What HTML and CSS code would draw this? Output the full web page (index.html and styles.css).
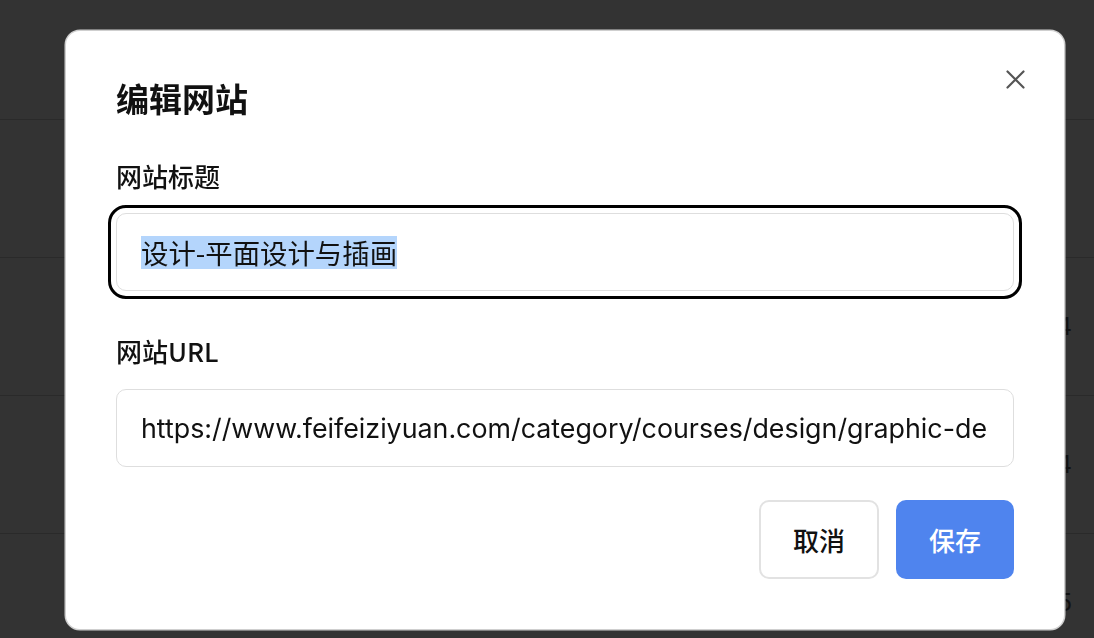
FILE: index.html
```html
<!DOCTYPE html>
<html lang="zh-CN">
<head>
<meta charset="utf-8">
<title>编辑网站</title>
<link rel="stylesheet" href="styles.css">
</head>
<body>
<div class="page">
  <div class="page-head"></div>
  <div class="row"><span class="num"></span></div>
  <div class="row"><span class="num">4</span></div>
  <div class="row"><span class="num">4</span></div>
  <div class="row row-last"><span class="num">5</span></div>
</div>

<div class="overlay">
  <div class="modal" role="dialog" aria-labelledby="dlg-title">
    <button class="close" aria-label="关闭">
      <svg width="19" height="19" viewBox="0 0 19 19"><path d="M1.5 1.5 L17.5 17.5 M17.5 1.5 L1.5 17.5" stroke="#555" stroke-width="2.2" stroke-linecap="round" fill="none"/></svg>
    </button>
    <h2 class="title" id="dlg-title">编辑网站</h2>
    <label class="label">网站标题</label>
    <div class="field focused" role="textbox"><span class="sel">设计-平面设计与插画</span></div>
    <label class="label label-url">网站URL</label>
    <div class="field" role="textbox"><span class="url">https://www.feifeiziyuan.com/category/courses/design/graphic-de</span></div>
    <div class="actions">
      <button class="btn btn-cancel">取消</button>
      <button class="btn btn-save">保存</button>
    </div>
  </div>
</div>
</body>
</html>
```

FILE: styles.css
```css
html, body {
  margin: 0;
  padding: 0;
  height: 100%;
  overflow: hidden;
}
body {
  background: #333333;
  font-family: "Noto Sans CJK SC", "Inter", sans-serif;
  color: #111;
}
.page {
  display: flex;
  flex-direction: column;
}
.page-head {
  height: 119px;
  border-bottom: 1px solid #2a2a2a;
}
.row {
  height: 137px;
  border-bottom: 1px solid #2a2a2a;
  display: flex;
  align-items: center;
  justify-content: flex-end;
  padding-right: 22px;
}
.row-last {
  height: 104px;
  border-bottom: 0;
  align-items: flex-start;
  box-sizing: border-box;
  padding-top: 54px;
}
.num {
  font-family: "Inter", sans-serif;
  font-size: 24px;
  line-height: 29px;
  color: #111;
}
.overlay {
  position: fixed;
  inset: 0;
  padding: 31px 30px 0 66px;
}
.modal {
  position: relative;
  box-sizing: border-box;
  height: 598px;
  background: #fff;
  border-radius: 14px;
  box-shadow: 0 0 0 1.5px #cfcfcf;
  padding: 46px 50px 48px 50px;
  display: flex;
  flex-direction: column;
}
.close {
  position: absolute;
  top: 39px;
  right: 39px;
  width: 19px;
  height: 19px;
  padding: 0;
  border: 0;
  background: none;
  display: flex;
}
.title {
  margin: 0;
  font-size: 33px;
  line-height: 42px;
  font-weight: 700;
}
.label {
  margin-top: 40px;
  font-size: 26px;
  line-height: 34px;
  font-weight: 500;
}
.label-url {
  margin-top: 43px;
}
.field {
  box-sizing: border-box;
  height: 78px;
  margin-top: 20px;
  border: 1px solid #dedede;
  border-radius: 10px;
  padding: 0 24px;
  display: flex;
  align-items: center;
  white-space: nowrap;
  font-size: 27px;
}
.label-url + .field {
  margin-top: 21px;
}
.focused {
  outline: 3px solid #000;
  outline-offset: 5px;
}
.sel {
  display: inline-block;
  background: #b4d5fc;
  font-size: 27.4px;
  line-height: 27px;
  padding: 3px 0;
  color: #111;
}
.url {
  flex: 1;
  min-width: 0;
  overflow: hidden;
  font-family: "Inter", "Noto Sans CJK SC", sans-serif;
  font-size: 26.8px;
  line-height: 36px;
  color: #111;
}
.actions {
  margin-top: 33px;
  display: flex;
  justify-content: flex-end;
  gap: 17px;
}
.btn {
  box-sizing: border-box;
  height: 79px;
  border-radius: 10px;
  font-family: "Noto Sans CJK SC", sans-serif;
  font-size: 26px;
  font-weight: 500;
  padding: 0;
}
.btn-cancel {
  width: 120px;
  background: #fff;
  border: 2px solid #e2e2e2;
  color: #111;
}
.btn-save {
  width: 118px;
  background: #4f84ee;
  border: 0;
  color: #fff;
}
```
